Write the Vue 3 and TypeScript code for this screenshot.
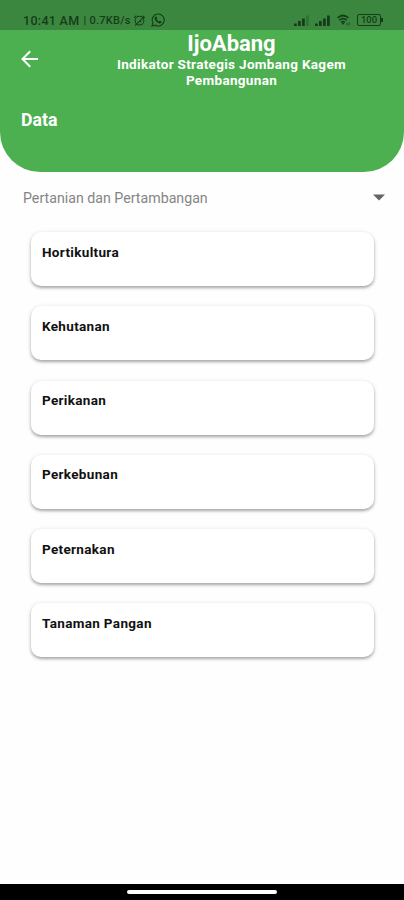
<script setup lang="ts">
import { ref } from 'vue'

const category = ref('Pertanian dan Pertambangan')
const items: string[] = ['Hortikultura', 'Kehutanan', 'Perikanan', 'Perkebunan', 'Peternakan', 'Tanaman Pangan']
const signals = [{ id: 1, strength: 3 }, { id: 2, strength: 4 }]
</script>

<template>
  <div class="screen">
    <div class="status">
      <div class="status-left">
        <span class="clock">10:41 AM</span>
        <span class="speed">| 0.7KB/s</span>
        <svg class="alarm" viewBox="0 0 14 14" width="13" height="13" fill="none" stroke="currentColor" stroke-width="1.1">
          <circle cx="7" cy="7.2" r="4.7" />
          <path d="M1.2 4.2 3.6 1.8M10.4 1.8l2.4 2.4M2.2 12.4 11.8 3M7 7.2l1.8 1.6" />
        </svg>
        <svg class="whatsapp" viewBox="0 0 14 14" width="14" height="14">
          <path d="M1 13l.9-3.2A6 6 0 1 1 4.2 12.2Z" fill="none" stroke="currentColor" stroke-width="1.1" />
          <path d="M4.3 3.7l1.1-.2.9 1.8-.6.9c.5 1 1.2 1.7 2.2 2.2l.9-.7 1.8.9c0 1.3-1 2-2.2 1.8C5.900 9.900 3.500 7.300 3.600 5.100c0-.6.300-1.100.7-1.400Z" fill="currentColor" />
        </svg>
      </div>
      <div class="status-right">
        <svg v-for="s in signals" :key="s.id" class="signal" viewBox="0 0 16 11" width="16" height="11" fill="currentColor">
          <rect x="0" y="8.5" width="2.8" height="2.5" />
          <rect x="4" y="6" width="2.8" height="5" />
          <rect x="8" y="3.5" width="2.8" height="7.5" />
          <rect x="12" y="0.5" width="2.8" height="10.5" :opacity="s.strength > 3 ? 1 : 0.3" />
        </svg>
        <svg class="wifi" viewBox="0 0 14 12" width="14" height="12" fill="none" stroke="currentColor" stroke-width="1.7">
          <path d="M.6 3.8Q6-.8 11.4 3.8M2.3 6.2q3.700-3 7.400 0M4.100 8.300q1.900-1.500 3.800 0" />
          <path d="M6 11 4.600 9.100h2.800Z" fill="currentColor" stroke="none" />
          <path d="M10 9v2.500M12.300 8.500V11" stroke-width="0.8" />
        </svg>
        <div class="battery">100</div>
      </div>
    </div>

    <header class="header">
      <div class="bar">
        <button class="back" aria-label="Kembali">
          <svg viewBox="0 0 18 18" width="18" height="18" fill="none" stroke="currentColor" stroke-width="2">
            <path d="M17 9H2M9.2 1.3 1.5 9l7.7 7.7" />
          </svg>
        </button>
        <div class="heading">
          <h1>IjoAbang</h1>
          <p>Indikator Strategis Jombang Kagem<br />Pembangunan</p>
        </div>
      </div>
      <h2>Data</h2>
    </header>

    <main class="content">
      <div class="select">
        <span>{{ category }}</span>
        <svg viewBox="0 0 12 7" width="12" height="7"><path d="M0 .4h12L6 6.600Z" fill="#646464" /></svg>
      </div>
      <div class="list">
        <div v-for="item in items" :key="item" class="card"><span>{{ item }}</span></div>
      </div>
    </main>

    <footer class="nav"><div class="handle"></div></footer>
  </div>
</template>

<style>
body {
  margin: 0;
  background: #fefefe;
}
</style>

<style scoped>
.screen {
  display: flex;
  flex-direction: column;
  width: 404px;
  height: 900px;
  overflow: hidden;
  background: #fefefe;
  font-family: Roboto, sans-serif;
}
.status {
  box-sizing: border-box;
  flex: none;
  display: flex;
  justify-content: space-between;
  align-items: center;
  height: 30px;
  padding: 10px 23px 0 23px;
  background: #3c873f;
  color: #153d18;
}
.status-left,
.status-right {
  display: flex;
  align-items: center;
}
.clock {
  font-size: 12.5px;
  font-weight: 500;
  letter-spacing: 0.3px;
}
.speed {
  margin-left: 4px;
  font-size: 11px;
  font-weight: 500;
  letter-spacing: 0.26px;
}
.alarm {
  margin-left: 2px;
}
.whatsapp {
  margin-left: 5px;
}
.signal {
  margin-right: 5px;
}
.wifi {
  margin-left: 1px;
}
.battery {
  position: relative;
  box-sizing: border-box;
  width: 24px;
  height: 12px;
  margin-left: 6px;
  border: 1.5px solid currentColor;
  border-radius: 2px;
  font-size: 9.5px;
  font-weight: 500;
  line-height: 10px;
  text-align: center;
}
.battery::after {
  content: '';
  position: absolute;
  top: 3px;
  right: -3px;
  width: 2px;
  height: 4px;
  background: currentColor;
}
.header {
  box-sizing: border-box;
  flex: none;
  height: 142px;
  border-radius: 0 0 40px 40px;
  background: #4caf50;
  color: #fff;
}
.bar {
  display: flex;
  height: 61px;
}
.back {
  display: flex;
  width: 59px;
  height: 18px;
  margin: 20px 0 0;
  padding: 0 0 0 21px;
  border: 0;
  background: none;
  color: inherit;
}
.heading {
  width: 345px;
  text-align: center;
}
h1 {
  margin: 2px 0 0;
  font-size: 22px;
  font-weight: 700;
  line-height: 24px;
}
p {
  margin: 0;
  font-size: 13.5px;
  font-weight: 700;
  letter-spacing: 0.32px;
  line-height: 16.4px;
}
h2 {
  margin: 19px 0 0 21px;
  font-size: 17.7px;
  font-weight: 700;
  line-height: 20px;
}
.content {
  flex: 1;
}
.select {
  display: flex;
  align-items: center;
  justify-content: space-between;
  height: 51px;
  padding: 0 19px 0 23px;
  color: #858585;
  font-size: 14.2px;
}
.list {
  display: flex;
  flex-direction: column;
  gap: 20.3px;
  padding: 9px 30px 0 31px;
}
.card {
  box-sizing: border-box;
  height: 54px;
  padding: 10.5px 11px;
  border-radius: 10px;
  background: #fff;
  box-shadow: 0 2px 3px rgba(0, 0, 0, 0.28), 0 1px 5px rgba(0, 0, 0, 0.12);
  color: #111;
  font-size: 13.5px;
  font-weight: 700;
  letter-spacing: 0.33px;
  line-height: 18px;
}
.nav {
  flex: none;
  display: flex;
  justify-content: center;
  height: 16px;
  background: #000;
}
.handle {
  width: 150px;
  height: 4px;
  margin-top: 5.5px;
  border-radius: 2px;
  background: #fff;
}
</style>
